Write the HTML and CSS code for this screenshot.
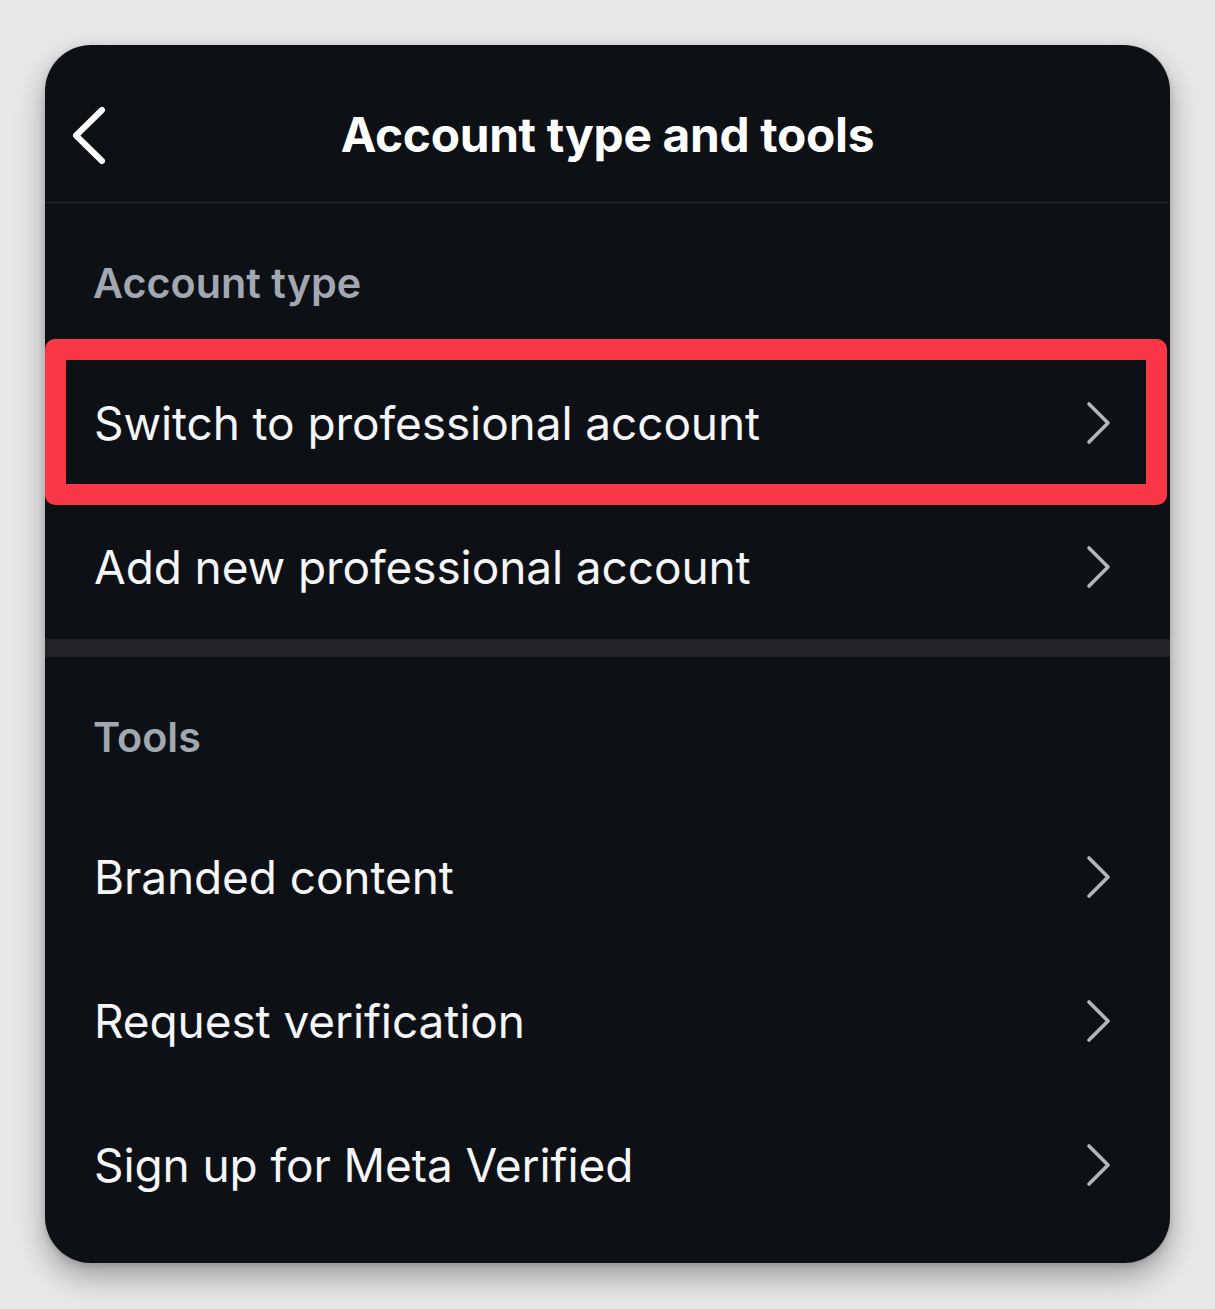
FILE: index.html
```html
<!DOCTYPE html>
<html lang="en">
<head>
<meta charset="utf-8">
<title>Account type and tools</title>
<link rel="stylesheet" href="styles.css">
</head>
<body>
<div class="card">
  <header class="header">
    <svg class="back" width="40" height="60" viewBox="0 0 40 60" aria-hidden="true">
      <path d="M32 3 L6 28.5 L32 54" fill="none" stroke="#ffffff" stroke-width="6" stroke-linecap="round" stroke-linejoin="round"/>
    </svg>
    <h1 class="title">Account type and tools</h1>
  </header>

  <section class="section">
    <div class="label">Account type</div>
    <div class="row highlighted">
      <span class="row-text">Switch to professional account</span>
      <svg class="chev" width="26" height="44" viewBox="0 0 26 44" aria-hidden="true"><path d="M3 3 L22 22 L3 41" fill="none" stroke="#b3b7bd" stroke-width="3.6" stroke-linecap="round" stroke-linejoin="round"/></svg>
      <div class="mark"></div>
    </div>
    <div class="row">
      <span class="row-text">Add new professional account</span>
      <svg class="chev" width="26" height="44" viewBox="0 0 26 44" aria-hidden="true"><path d="M3 3 L22 22 L3 41" fill="none" stroke="#b3b7bd" stroke-width="3.6" stroke-linecap="round" stroke-linejoin="round"/></svg>
    </div>
  </section>

  <div class="band"></div>

  <section class="section">
    <div class="label">Tools</div>
    <div class="row">
      <span class="row-text">Branded content</span>
      <svg class="chev" width="26" height="44" viewBox="0 0 26 44" aria-hidden="true"><path d="M3 3 L22 22 L3 41" fill="none" stroke="#b3b7bd" stroke-width="3.6" stroke-linecap="round" stroke-linejoin="round"/></svg>
    </div>
    <div class="row">
      <span class="row-text">Request verification</span>
      <svg class="chev" width="26" height="44" viewBox="0 0 26 44" aria-hidden="true"><path d="M3 3 L22 22 L3 41" fill="none" stroke="#b3b7bd" stroke-width="3.6" stroke-linecap="round" stroke-linejoin="round"/></svg>
    </div>
    <div class="row">
      <span class="row-text">Sign up for Meta Verified</span>
      <svg class="chev" width="26" height="44" viewBox="0 0 26 44" aria-hidden="true"><path d="M3 3 L22 22 L3 41" fill="none" stroke="#b3b7bd" stroke-width="3.6" stroke-linecap="round" stroke-linejoin="round"/></svg>
    </div>
  </section>
</div>
</body>
</html>
```

FILE: styles.css
```css
* { box-sizing: border-box; }

html, body {
  margin: 0;
  padding: 0;
}

body {
  background: #e8e8e8;
  font-family: Inter, "Noto Sans", "Liberation Sans", sans-serif;
  width: 1215px;
  height: 1309px;
  padding: 45px 45px 0 45px;
}

.card {
  width: 1125px;
  height: 1218px;
  background: #0d1015;
  border-radius: 46px;
  box-shadow: 0 14px 30px rgba(0, 0, 0, 0.32), 0 2px 6px rgba(0, 0, 0, 0.15);
  color: #f5f6f7;
  padding-bottom: 25px;
}

.header {
  height: 158px;
  border-bottom: 1px solid #262a30;
  display: flex;
  align-items: center;
  justify-content: center;
  position: relative;
  padding-top: 22px;
}

.back {
  position: absolute;
  left: 25px;
  top: 62px;
}

.title {
  margin: 0;
  font-size: 47.8px;
  font-weight: 700;
  letter-spacing: -0.3px;
  color: #ffffff;
}

.section {
  display: flex;
  flex-direction: column;
}

.label {
  height: 148px;
  display: flex;
  align-items: center;
  padding-left: 48px;
  padding-top: 12px;
  font-size: 41.3px;
  font-weight: 600;
  color: #a2a8b1;
}

.row {
  height: 144px;
  display: flex;
  align-items: center;
  justify-content: space-between;
  padding: 0 58px 0 49px;
  position: relative;
}

.row-text {
  font-size: 46px;
  font-weight: 400;
  letter-spacing: -0.1px;
  color: #f5f6f7;
}

.chev {
  display: block;
}

.mark {
  position: absolute;
  left: 0;
  right: 3px;
  top: -12px;
  bottom: -10px;
  border: 21px solid #f93747;
  border-radius: 10px;
  pointer-events: none;
}

.band {
  height: 18px;
  background: #232428;
}
```
